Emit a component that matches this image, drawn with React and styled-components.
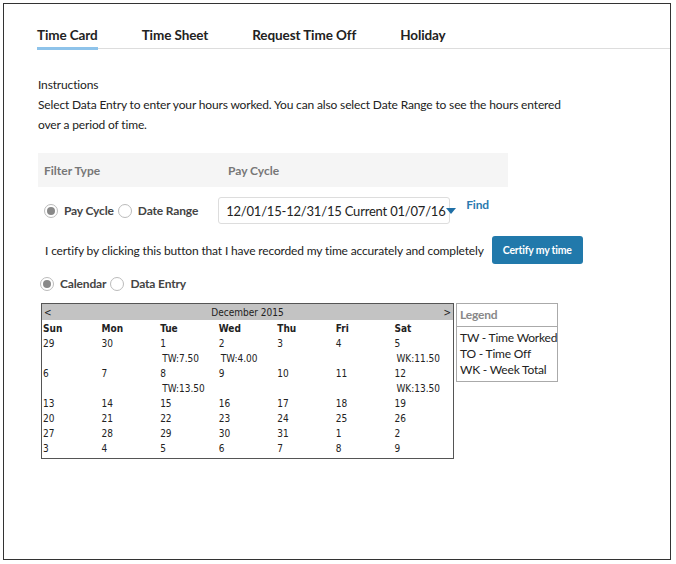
import React from "react";
import styled, { createGlobalStyle } from "styled-components";

const G = createGlobalStyle`
  body{margin:0;background:#fff;font-family:Lato,"Open Sans",sans-serif;color:#222;}
`;
const Frame = styled.div`
  margin:3px;width:668px;height:557px;border:1px solid #333;box-sizing:border-box;
  padding:17px 0 0 33px;
`;
const Tabs = styled.div`display:flex;border-bottom:1px solid #ddd;`;
const Tab = styled.div`
  font-size:13.5px;font-weight:700;padding:6px 0 4px;margin-right:${p=>p.mr}px;letter-spacing:-0.1px;
  border-bottom:3px solid ${p=>p.active?"#8ec3ea":"transparent"};margin-bottom:-2px;
`;
const Section = styled.div`font-size:12px;letter-spacing:-0.15px;line-height:20px;margin-top:26px;`;
const FilterHead = styled.div`
  display:flex;background:#f5f5f5;height:34px;align-items:center;width:464px;margin-top:18px;
  color:#777;font-weight:700;font-size:12px;padding-left:6px;
`;
const Col = styled.div`width:${p=>p.w}px;`;
const Row = styled.div`display:flex;align-items:center;margin-top:${p=>p.mt||0}px;padding-left:${p=>p.pl||0}px;font-size:12px;letter-spacing:-0.15px;`;
const Radio = styled.span`
  width:14px;height:14px;border-radius:50%;border:1px solid #bbb;box-sizing:border-box;
  display:inline-flex;align-items:center;justify-content:center;margin-right:6px;background:#fff;
  &::after{content:"";width:8px;height:8px;border-radius:50%;background:${p=>p.on?"#888":"transparent"};}
`;
const RLabel = styled.span`font-size:12px;font-weight:700;color:#444;margin-right:4px;`;
const Select = styled.div`
  margin-left:16px;height:27px;width:232px;border:1px solid #ddd;border-radius:3px;box-sizing:border-box;white-space:nowrap;
  display:flex;align-items:center;padding:0 7px;font-size:13px;justify-content:space-between;letter-spacing:-0.2px;
`;
const Caret = styled.span`width:0;height:0;border-left:5px solid transparent;border-right:5px solid transparent;border-top:6px solid #1f6fa6;`;
const Find = styled.span`color:#2a7ab0;font-size:12px;font-weight:700;margin-left:16px;align-self:flex-start;margin-top:0px;`;
const Btn = styled.div`
  background:#2179ab;color:#fff;font-size:10.5px;font-weight:700;border-radius:3px;letter-spacing:-0.2px;
  padding:0 11px;height:28px;display:flex;align-items:center;margin-left:8px;
`;
const CalWrap = styled.div`display:flex;align-items:flex-start;margin-top:12px;margin-left:3px;`;
const Cal = styled.div`width:411px;border:1px solid #555;font-family:"DejaVu Sans Condensed","DejaVu Sans",sans-serif;font-size:10px;`;
const CalHead = styled.div`background:#c3c3c3;height:16px;display:flex;align-items:center;justify-content:space-between;padding:0 2px;`;
const Grid = styled.div`display:grid;grid-template-columns:repeat(7,1fr);padding:1px 0 2px 1px;`;
const Cell = styled.div`line-height:15px;padding-left:${p=>p.sub?2:0}px;font-weight:${p=>p.b?700:400};height:15px;`;
const Legend = styled.div`margin-left:2px;border:1px solid #aaa;width:100px;font-size:12px;white-space:nowrap;letter-spacing:-0.2px;`;
const LegHead = styled.div`color:#888;font-weight:700;padding:3px;border-bottom:1px solid #aaa;height:16px;`;
const LegBody = styled.div`padding:3px;line-height:16px;`;

const weeks=[
 [["29"],["30"],["1","TW:7.50"],["2","TW:4.00"],["3"],["4"],["5","WK:11.50"]],
 [["6"],["7"],["8","TW:13.50"],["9"],["10"],["11"],["12","WK:13.50"]],
 [["13"],["14"],["15"],["16"],["17"],["18"],["19"]],
 [["20"],["21"],["22"],["23"],["24"],["25"],["26"]],
 [["27"],["28"],["29"],["30"],["31"],["1"],["2"]],
 [["3"],["4"],["5"],["6"],["7"],["8"],["9"]],
];

export default function App(){
  return <><G/><Frame>
    <Tabs>
      <Tab active mr={44}>Time Card</Tab><Tab mr={44}>Time Sheet</Tab><Tab mr={44}>Request Time Off</Tab><Tab mr={0}>Holiday</Tab>
    </Tabs>
    <div style={{paddingLeft:1}}>
    <Section>Instructions<br/>Select Data Entry to enter your hours worked. You can also select Date Range to see the hours entered<br/>over a period of time.</Section>
    <FilterHead><Col w={184}>Filter Type</Col><Col w={200}>Pay Cycle</Col></FilterHead>
    <Row mt={10} pl={6}>
      <Radio on/><RLabel>Pay Cycle</RLabel><Radio/><RLabel>Date Range</RLabel>
      <Select>12/01/15-12/31/15 Current 01/07/16<Caret/></Select><Find>Find</Find>
    </Row>
    <Row mt={12} pl={7}>I certify by clicking this button that I have recorded my time accurately and completely<Btn>Certify my time</Btn></Row>
    <Row mt={12} pl={2}><Radio on/><RLabel>Calendar</RLabel><Radio/><RLabel>Data Entry</RLabel></Row>
    <CalWrap>
      <Cal>
        <CalHead><span>&lt;</span><span>December 2015</span><span>&gt;</span></CalHead>
        <Grid>
          {["Sun","Mon","Tue","Wed","Thu","Fri","Sat"].map(d=><Cell b key={d}>{d}</Cell>)}
          {weeks.map((w,i)=>{
            const has=w.some(c=>c[1]);
            return <React.Fragment key={i}>
              {w.map((c,j)=><Cell key={j}>{c[0]}</Cell>)}
              {has && w.map((c,j)=><Cell sub key={"s"+j}>{c[1]||""}</Cell>)}
            </React.Fragment>;
          })}
        </Grid>
      </Cal>
      <Legend><LegHead>Legend</LegHead><LegBody>TW - Time Worked<br/>TO - Time Off<br/>WK - Week Total</LegBody></Legend>
    </CalWrap>
    </div>
  </Frame></>;
}
